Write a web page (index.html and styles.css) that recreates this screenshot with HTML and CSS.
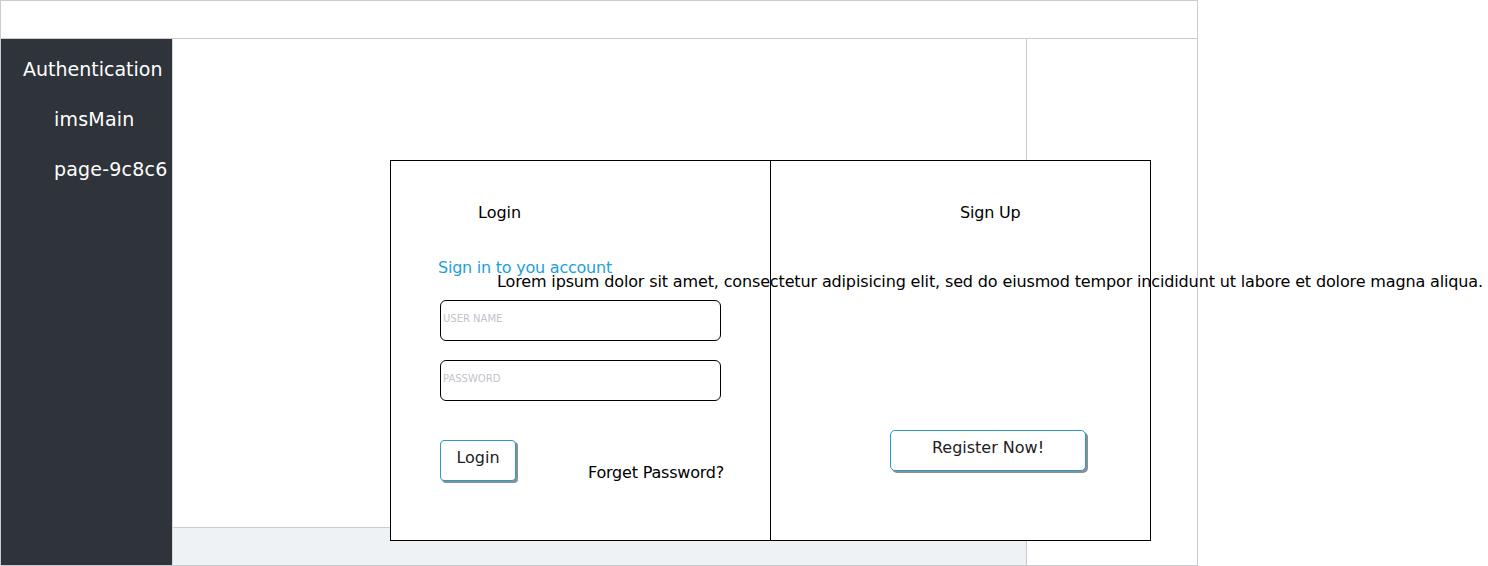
FILE: index.html
```html
<!DOCTYPE html>
<html>
<head>
<meta charset="utf-8">
<link rel="stylesheet" href="styles.css">
</head>
<body>
<div class="frame">
  <div class="header"></div>
  <div class="layout">
    <nav class="sidebar">
      <div class="nav-head">Authentication</div>
      <div class="nav-item">imsMain</div>
      <div class="nav-item">page-9c8c6</div>
    </nav>
    <main class="main">
      <div class="content"></div>
      <div class="footer"></div>
    </main>
    <aside class="side-right"></aside>
  </div>
</div>

<div class="auth-box">
  <section class="panel panel-login">
    <h2 class="panel-title login-title">Login</h2>
    <p class="subtitle">Sign in to you account</p>
    <p class="lorem">Lorem ipsum dolor sit amet, consectetur adipisicing elit, sed do eiusmod tempor incididunt ut labore et dolore magna aliqua.</p>
    <div class="field"><span class="placeholder">USER NAME</span></div>
    <div class="field"><span class="placeholder">PASSWORD</span></div>
    <div class="actions">
      <button class="btn btn-login">Login</button>
      <span class="forget">Forget Password?</span>
    </div>
  </section>
  <section class="panel panel-signup">
    <h2 class="panel-title signup-title">Sign Up</h2>
    <button class="btn btn-register">Register Now!</button>
  </section>
</div>
</body>
</html>
```
FILE: styles.css
```css
* { box-sizing: border-box; }
body {
  margin: 0;
  font-family: "DejaVu Sans", "Noto Sans", sans-serif;
  background: #fff;
  position: relative;
}
.frame {
  width: 1198px;
  height: 566px;
  border: 1px solid #c8ccd3;
  display: flex;
  flex-direction: column;
}
.header {
  height: 38px;
  border-bottom: 1px solid #c8ccd3;
  flex: none;
}
.layout {
  flex: 1;
  display: flex;
  min-height: 0;
}
.sidebar {
  width: 171px;
  background: #2f343b;
  color: #fff;
  overflow: hidden;
  white-space: nowrap;
  font-size: 19px;
  padding-top: 18px;
}
.nav-head {
  height: 50px;
  line-height: 24px;
  padding-left: 22px;
}
.nav-item {
  height: 50px;
  line-height: 24px;
  padding-left: 53px;
  letter-spacing: 0.2px;
}
.main {
  width: 855px;
  border-right: 1px solid #c8ccd3;
  border-left: 1px solid #d4d7dc;
  display: flex;
  flex-direction: column;
}
.content { flex: 1; }
.footer {
  height: 38px;
  border-top: 1px solid #c8ccd3;
  background: #eef2f5;
}
.side-right { flex: 1; }

.auth-box {
  position: absolute;
  left: 390px;
  top: 160px;
  width: 761px;
  height: 381px;
  border: 1px solid #000;
  background: #fff;
  display: flex;
}
.panel {
  position: relative;
}
.panel-login {
  width: 380px;
  border-right: 1px solid #000;
  padding-left: 49px;
}
.panel-signup {
  flex: 1;
}
.panel-title {
  margin: 0;
  font-weight: normal;
  font-size: 16px;
  line-height: 20px;
  color: #000;
}
.login-title {
  padding-top: 42px;
  margin-left: 38px;
}
.signup-title {
  padding-top: 42px;
  margin-left: 189px;
  letter-spacing: -0.2px;
}
.subtitle {
  margin: 35px 0 0 -2px;
  font-size: 16px;
  line-height: 20px;
  color: #1ea0d9;
  letter-spacing: -0.23px;
}
.lorem {
  margin: -6px 0 0 57px;
  font-size: 16px;
  line-height: 20px;
  color: #000;
  white-space: nowrap;
  letter-spacing: -0.14px;
}
.field {
  width: 281px;
  height: 41px;
  border: 1px solid #000;
  border-radius: 6px;
  margin-top: 8px;
  padding: 12px 0 0 2px;
}
.field + .field { margin-top: 19px; }
.placeholder {
  font-size: 10px;
  color: #c0c4cc;
  line-height: 12px;
  display: block;
}
.actions {
  margin-top: 39px;
  display: flex;
  align-items: flex-start;
}
.btn {
  font-family: inherit;
  font-size: 16px;
  color: #222;
  background: #fff;
  border: 1px solid #2a9bc4;
  box-shadow: 2px 2px 0 #8a8f96;
  padding: 0;
}
.btn-login {
  width: 76px;
  height: 41px;
  border-radius: 4px;
  line-height: 32px;
  padding-bottom: 6px;
}
.forget {
  margin: 23px 0 0 72px;
  font-size: 16px;
  line-height: 20px;
  color: #000;
  letter-spacing: -0.2px;
}
.btn-register {
  display: block;
  margin: 207px 0 0 119px;
  width: 196px;
  height: 41px;
  border-radius: 5px;
  padding-bottom: 6px;
}
```
